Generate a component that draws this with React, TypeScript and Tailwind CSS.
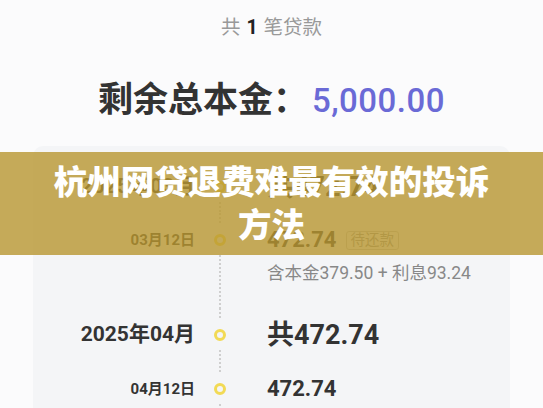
const font = "font-['Roboto','Noto_Sans_CJK_SC',sans-serif]";

type RowProps = {
  h: string;
  date?: React.ReactNode;
  dot?: boolean;
  lineTop?: boolean;
  align?: string;
  children?: React.ReactNode;
};

const Segment = ({ show = true }: { show?: boolean }) => (
  <div
    className={
      show
        ? "w-[2px] flex-1 bg-[repeating-linear-gradient(to_bottom,#cfcfcf_0px,#cfcfcf_2px,transparent_2px,transparent_4px)]"
        : "w-[2px] flex-1"
    }
  />
);

const Row = ({ h, date, dot, lineTop = true, align = "items-center", children }: RowProps) => (
  <div className={`grid grid-cols-[162px_50px_1fr] ${h}`}>
    <div className="flex items-center justify-end text-[#333]">{date}</div>
    <div className="flex flex-col items-center">
      {dot ? (
        <>
          <Segment show={lineTop} />
          <div className="my-[9px] h-[12px] w-[12px] shrink-0 rounded-full border-[3px] border-[#f2da55]" />
          <Segment />
        </>
      ) : (
        <Segment />
      )}
    </div>
    <div className={`flex pl-[22px] ${align}`}>{children}</div>
  </div>
);

export default function App() {
  return (
    <div className={`relative h-[408px] w-[543px] overflow-hidden bg-[#fbfbfc] ${font}`}>
      <div className="flex flex-col items-center">
        <p className="mt-[16px] flex items-center gap-[6px] text-[19.5px] leading-[24px] text-[#999]">
          <span>共</span>
          <span className="font-bold text-[#222]">1</span>
          <span>笔贷款</span>
        </p>
        <h1 className="mt-[41px] flex items-center text-[35px] leading-[40px] font-bold text-[#333]">
          <span>剩余总本金：</span>
          <span className="ml-[4px] text-[33px] font-medium tracking-[0.5px] text-[#6a6ad6]">5,000.00</span>
        </h1>
      </div>

      <div className="mx-[33px] mt-[25px] rounded-[10px] bg-[#f4f5f7] pt-[15px] pb-[40px]">
        <Row h="h-[52px]" dot lineTop={false} date={<span className="text-[21px] font-bold">2025年03月</span>}>
          <span className="text-[27px] leading-none font-bold text-[#333]">共472.74</span>
        </Row>
        <Row h="h-[54px]" dot date={<span className="text-[15px] font-bold">03月12日</span>}>
          <span className="text-[22px] leading-none font-bold text-[#333]">472.74</span>
          <span className="ml-[9px] rounded-[3px] border border-[#c9c9c9] px-[4px] text-[14.5px] leading-[17px] text-[#9a9a9a]">
            待还款
          </span>
        </Row>
        <Row h="h-[41px]" align="items-start">
          <span className="text-[17.5px] leading-[12px] text-[#888]">含本金379.50 + 利息93.24</span>
        </Row>
        <Row h="h-[54px]" dot date={<span className="text-[21px] font-bold">2025年04月</span>}>
          <span className="text-[27px] leading-none font-bold text-[#333]">共472.74</span>
        </Row>
        <Row h="h-[54px]" dot date={<span className="text-[15px] font-bold">04月12日</span>}>
          <span className="text-[22px] leading-none font-bold text-[#333]">472.74</span>
        </Row>
      </div>

      <div className="absolute inset-x-0 top-[152px] flex h-[103px] items-center justify-center bg-[#b8962f]/80">
        <p className="w-[450px] text-center text-[33.5px] leading-[43px] font-black text-white">
          杭州网贷退费难最有效的投诉方法
        </p>
      </div>
    </div>
  );
}
